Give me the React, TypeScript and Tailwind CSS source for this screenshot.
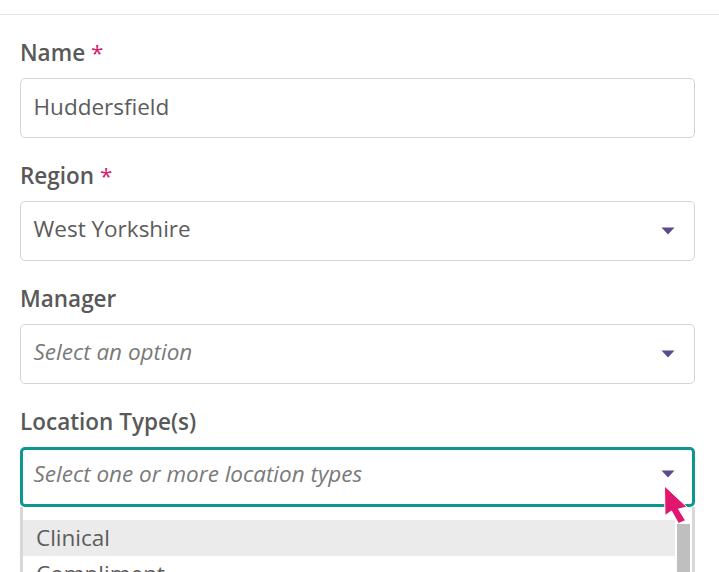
import type { ReactNode } from "react";

const font = { fontFamily: '"Open Sans", sans-serif' };

function Caret() {
  return (
    <svg width="14" height="8" viewBox="0 0 14 8" className="shrink-0">
      <path d="M0.5 0.5H13.5L7 7.5Z" fill="#5b4a8c" />
    </svg>
  );
}

function Field({ label, required, children }: { label: string; required?: boolean; children: ReactNode }) {
  return (
    <div className="flex flex-col">
      <label className="h-[40px] text-[22.5px] leading-[30px] font-semibold text-[#595959]">
        {label}
        {required && <span className="ml-[6px] font-medium text-[#d81b72]">*</span>}
      </label>
      {children}
    </div>
  );
}

function Select({ value, placeholder, focused }: { value?: string; placeholder?: string; focused?: boolean }) {
  if (focused) {
    return (
      <div className="flex h-[60px] items-center justify-between rounded-[5px] border-[3px] border-[#0f9690] bg-white pr-[17px] pb-[7px] pl-[10.5px]">
        <span className="text-[22.5px] text-[#7a7a7a] italic">{placeholder}</span>
        <Caret />
      </div>
    );
  }
  return (
    <div className="flex h-[60px] items-center justify-between rounded-[5px] border border-[#d4d4d4] bg-white pr-[19px] pl-[12.5px]">
      {value ? (
        <span className="-translate-y-[2px] text-[22.5px] text-[#5c5c5c]">{value}</span>
      ) : (
        <span className="-translate-y-[2px] text-[22.5px] text-[#7a7a7a] italic">{placeholder}</span>
      )}
      <Caret />
    </div>
  );
}

export default function App() {
  return (
    <div className="relative h-[572px] w-[719px] overflow-hidden bg-white" style={font}>
      <div className="h-[15px] border-b border-[#e8e8e8]" />
      <div className="flex flex-col gap-[23px] pt-[23px] pr-[24px] pl-[20px]">
        <Field label="Name" required>
          <div className="flex h-[60px] items-center rounded-[5px] border border-[#d4d4d4] bg-white pl-[12.5px]">
            <span className="-translate-y-[1px] text-[22.5px] text-[#5c5c5c]">Huddersfield</span>
          </div>
        </Field>
        <Field label="Region" required>
          <Select value="West Yorkshire" />
        </Field>
        <Field label="Manager">
          <Select placeholder="Select an option" />
        </Field>
        <Field label="Location Type(s)">
          <Select placeholder="Select one or more location types" focused />
          {/* open dropdown, cut off by the window */}
          <div className="flex h-[100px] border-x-[3px] border-[#d8d8d8] bg-white">
            <div className="flex-1 pt-[13px]">
              <div className="flex h-[36px] items-center bg-[#ebebeb] pl-[13px] text-[22.5px] text-[#5c5c5c]">Clinical</div>
              <div className="flex h-[36px] items-center pl-[13px] text-[22.5px] text-[#5c5c5c]">Compliment</div>
            </div>
            <div className="ml-[2px] w-[13px] pt-[17px]">
              <div className="h-full bg-[#bfbfbf]" />
            </div>
            <div className="w-[2px]" />
          </div>
        </Field>
      </div>
      {/* mouse pointer */}
      <svg width="28" height="42" viewBox="0 0 28 42" className="absolute top-[483px] left-[662px]">
        <path
          d="M2.5 3L25 24L16.5 26L23.5 37.5L16.5 40.5L9.5 28L3 32.5Z"
          fill="#e0176f"
          stroke="#ffffff"
          strokeWidth="1"
          strokeLinejoin="round"
        />
      </svg>
    </div>
  );
}
